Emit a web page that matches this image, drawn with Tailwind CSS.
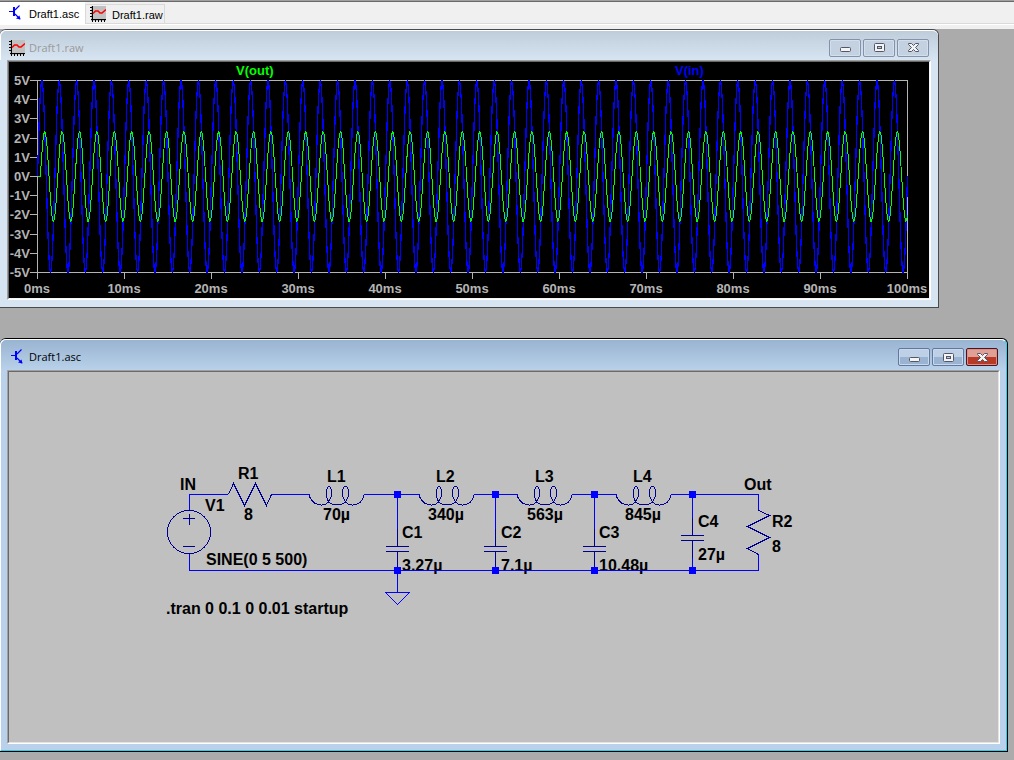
<!DOCTYPE html>
<html lang="en">
<head>
  <meta charset="UTF-8" />
  <meta name="viewport" content="width=device-width, initial-scale=1" />
  <title>Draft1 - Circuit Simulator</title>
  <script src="https://cdn.jsdelivr.net/npm/@tailwindcss/browser@4"></script>
</head>
<body class="bg-[#ababab] text-black h-screen flex flex-col overflow-hidden font-['Open_Sans','Noto_Sans',sans-serif]">

  <!-- Shared icons -->
  <svg class="hidden">
    <symbol id="transistor" viewBox="0 0 16 16">
      <path d="M5 3h2v9H5z" fill="#00f" />
      <path d="M1 7.500H5M7 6L11.500 1.500M7 10L12 15" stroke="#00f" stroke-width="1.200" fill="none" />
      <path d="M12.500 15.500L8 14.500 11.500 11.500z" fill="#00f" />
    </symbol>
    <symbol id="graph" viewBox="0 0 16 16">
      <path d="M1 0h15v15H1z" fill="#c0c0c0" />
      <path d="M2.500 0v16M1 13.500h15M0 1.500h3M0 4.500h3M0 7.500h3M0 10.500h3M5.500 13v3M8.500 13v3M11.500 13v3M14.500 13v3" stroke="#000" fill="none" shape-rendering="crispEdges" />
      <path d="M3 7.500L5.500 5H8L10 7H12L16 3.500" stroke="#f00" stroke-width="1.600" fill="none" />
    </symbol>
    <symbol id="minimize" viewBox="0 0 13 11">
      <rect x="1.500" y="5.500" width="10" height="4" rx="1" fill="#f4f4f4" stroke="#535666" />
    </symbol>
    <symbol id="maximize" viewBox="0 0 13 11">
      <rect x="1.500" y="1.500" width="10" height="8" rx="1" fill="#f4f4f4" stroke="#535666" />
      <rect x="4.500" y="4.500" width="4" height="2" fill="#b8cbe0" stroke="#535666" />
    </symbol>
    <symbol id="close" viewBox="0 0 13 11">
      <path d="M1.500 1.500H4.500L6.500 3.500 8.500 1.500H11.500V2.500L8.500 5.500 11.500 8.500V9.500H8.500L6.500 7.500 4.500 9.500H1.500V8.500L4.500 5.500 1.500 2.500z" fill="#f4f4f4" stroke="#535666" />
    </symbol>
  </svg>

  <!-- Document tabs -->
  <header class="shrink-0 h-[29px] bg-[#f0f0f0] border-t border-[#a0a0a0]">
    <nav class="flex h-6 border-t border-t-[#696969] border-b border-b-white">
      <a href="#schematic" class="flex items-start gap-[5px] w-[85px] h-[23px] pt-[2px] pl-2 bg-white font-['Liberation_Sans',sans-serif] text-[11px] leading-6">
        <svg class="w-4 h-4 shrink-0"><use href="#transistor" /></svg>
        <span class="-mt-[2px]">Draft1.asc</span>
      </a>
      <div class="flex flex-1 border-b border-[#dadada]">
        <a href="#waveform" class="flex items-center gap-[6px] w-20 mt-[2px] pl-1 border border-b-0 border-[#d9d9d9] font-['Liberation_Sans',sans-serif] text-[11px] leading-4">
          <svg class="w-4 h-4 shrink-0"><use href="#graph" /></svg>
          <span class="pt-[2px]">Draft1.raw</span>
        </a>
      </div>
    </nav>
  </header>

  <main class="relative flex-1">

    <!-- Waveform window -->
    <section id="waveform" class="absolute left-0 top-0 flex flex-col bg-[#d7e4f2] border border-l-0 border-[#4a4a4a] rounded-t-md">
      <div class="flex items-center h-[30px] pl-2 pr-[9px] rounded-t-md border-t border-l border-white bg-linear-to-b from-[#bfcddb] to-[#d7e4f2]">
        <svg class="w-4 h-4 mt-[5px]"><use href="#graph" /></svg>
        <h2 class="flex-1 pl-1 pt-[5px] text-[11px] leading-4 text-[#9a9a9a]">Draft1.raw</h2>
        <div class="flex gap-[2px] pt-1">
          <button aria-label="Minimize" class="flex items-center justify-center w-8 h-[18px] rounded-xs border border-[#8491ad] bg-[#c3d1e0] inset-ring inset-ring-[#d3dfeb]"><svg class="w-[13px] h-[11px]"><use href="#minimize" /></svg></button>
          <button aria-label="Maximize" class="flex items-center justify-center w-8 h-[18px] rounded-xs border border-[#8491ad] bg-[#c3d1e0] inset-ring inset-ring-[#d3dfeb]"><svg class="w-[13px] h-[11px]"><use href="#maximize" /></svg></button>
          <button aria-label="Close" class="flex items-center justify-center w-8 h-[18px] rounded-xs border border-[#8491ad] bg-[#c3d1e0] inset-ring inset-ring-[#d3dfeb]"><svg class="w-[13px] h-[11px]"><use href="#close" /></svg></button>
        </div>
      </div>
      <div class="px-[7px] pb-[7px]">
        <div class="border border-t-[#a0a0a0] border-l-[#a0a0a0] border-r-white border-b-white">
          <div class="border border-t-[#696969] border-l-[#696969] border-r-[#f4f4f4] border-b-[#f4f4f4] bg-black">
            <svg class="block w-[920px] h-[236px] font-['Liberation_Sans',sans-serif] font-bold text-[13px]" viewBox="9 62 920 236">
              <g id="axes" stroke="#b4b4b4" fill="none" shape-rendering="crispEdges">
                <rect x="37.500" y="80.500" width="870" height="192" />
              </g>
              <g id="labels" fill="#b4b4b4"></g>
              <text x="236" y="75" fill="#0f0">V(out)</text>
              <text x="675" y="75" fill="#00f">V(in)</text>
              <polyline id="vin" stroke="#00f" stroke-width="1.300" fill="none" shape-rendering="crispEdges" />
              <polyline id="vout" stroke="#0f0" fill="none" shape-rendering="crispEdges" />
            </svg>
          </div>
        </div>
      </div>
    </section>

    <!-- Schematic window -->
    <section id="schematic" class="absolute left-0 right-[6px] top-[309px] bottom-2 flex flex-col bg-[#b9d1ea] border border-l-0 border-black rounded-t-md">
      <div class="flex-1 min-h-0 flex flex-col border border-t-white border-l-white border-r-[#25cfee] border-b-[#25cfee] rounded-t-md bg-linear-to-b from-[#99b4d1] to-[#b9d1ea] to-[30px]">
        <div class="flex items-center shrink-0 h-[30px] pl-[9px] pr-2">
          <svg class="w-4 h-4 mt-[2px]"><use href="#transistor" /></svg>
          <h2 class="flex-1 pl-[3px] pt-1 text-[11px] leading-4">Draft1.asc</h2>
          <div class="flex gap-[2px] pt-1">
            <button aria-label="Minimize" class="flex items-center justify-center w-8 h-[18px] rounded-xs border border-[#65779a] bg-linear-to-b from-[#bdd0e6] from-50% to-[#9ab3d0] to-50% inset-ring inset-ring-[#c6d9ee]"><svg class="w-[13px] h-[11px]"><use href="#minimize" /></svg></button>
            <button aria-label="Maximize" class="flex items-center justify-center w-8 h-[18px] rounded-xs border border-[#65779a] bg-linear-to-b from-[#bdd0e6] from-50% to-[#9ab3d0] to-50% inset-ring inset-ring-[#c6d9ee]"><svg class="w-[13px] h-[11px]"><use href="#maximize" /></svg></button>
            <button aria-label="Close" class="flex items-center justify-center w-8 h-[18px] rounded-xs border border-[#4a1420] bg-linear-to-b from-[#e0a096] from-50% to-[#b83a26] to-50% inset-ring inset-ring-[#dc8f84]"><svg class="w-[13px] h-[11px]"><use href="#close" /></svg></button>
          </div>
        </div>
        <div class="flex-1 min-h-0 flex pl-[6px] pr-[6px] pb-[6px]">
          <div class="flex-1 flex border border-t-[#a0a0a0] border-l-[#a0a0a0] border-r-white border-b-white">
            <div class="flex-1 overflow-hidden border border-t-[#696969] border-l-[#696969] border-r-[#e3e3e3] border-b-[#e3e3e3] bg-[#c0c0c0]">
              <svg class="block w-[989px] h-[370px] font-['Liberation_Sans',sans-serif] font-bold text-[16px]" viewBox="9 372 989 370">
                <defs>
                  <path id="coil" d="M0 0V2C3 9 8 10.500 12 10.500C19 10.500 22 4 22 -1C22 -5 21 -8 19.500 -8C18 -8 17 -5 17 -1C17 4 19 10.500 27.500 10.500C36 10.500 39 4 39 -1C39 -5 38 -8 36 -8C34 -8 33 -5 33 -1C33 4 36 10.500 43 10.500C48 10.500 52 9 54 2V0" />
                  <path id="cap" d="M0 -20V-2M-12 -2H11M-12 3H11M0 3V20" />
                </defs>

                <g fill="#000">
                  <text x="180" y="490">IN</text>
                  <text x="238" y="479">R1</text>
                  <text x="205" y="511">V1</text>
                  <text x="244" y="520">8</text>
                  <text x="206" y="565">SINE(0 5 500)</text>
                  <text x="166" y="614">.tran 0 0.1 0 0.01 startup</text>
                  <text x="327" y="482">L1</text>
                  <text x="323" y="520">70µ</text>
                  <text x="436" y="482">L2</text>
                  <text x="428" y="520">340µ</text>
                  <text x="535" y="482">L3</text>
                  <text x="527" y="520">563µ</text>
                  <text x="633" y="482">L4</text>
                  <text x="625" y="520">845µ</text>
                  <text x="402" y="538">C1</text>
                  <text x="402" y="571">3.27µ</text>
                  <text x="501" y="538">C2</text>
                  <text x="501" y="571">7.1µ</text>
                  <text x="599" y="538">C3</text>
                  <text x="599" y="571">10.48µ</text>
                  <text x="698" y="527">C4</text>
                  <text x="698" y="560">27µ</text>
                  <text x="744" y="490">Out</text>
                  <text x="772" y="527">R2</text>
                  <text x="772" y="552">8</text>
                </g>

                <!-- Wires and ground -->
                <path stroke="#00f" fill="none" shape-rendering="crispEdges" d="M189.500 510V494.500H228M271 494.500H309.500M363.500 494.500H419.500M473.500 494.500H517.500M571.500 494.500H616.500M670.500 494.500H758.500V510M758.500 554V570.500H189.500V553M397.500 494V529M495.500 494V529M594.500 494V529M692.500 494V518M397.500 566V592.500M692.500 556V570M385.500 592.500H409.500L397.500 604.500z" />

                <!-- Components -->
                <g stroke="#000090" fill="none" shape-rendering="crispEdges">
                  <circle cx="189" cy="532" r="21.500" />
                  <path d="M183 518.500H195M189.500 514V525M183 546.500H195" />
                  <path d="M228.500 494.500L233.500 483.500 244.500 505.500 255.500 483.500 266.500 505.500 271.500 494.500" />
                  <path d="M758.500 510V510.500L769.500 515.500 747.500 526.500 769.500 537.500 747.500 548.500 758.500 554.500" />
                  <use href="#coil" x="309.500" y="494.500" />
                  <use href="#coil" x="419.500" y="494.500" />
                  <use href="#coil" x="517.500" y="494.500" />
                  <use href="#coil" x="616.500" y="494.500" />
                  <use href="#cap" x="397.500" y="548.500" />
                  <use href="#cap" x="495.500" y="548.500" />
                  <use href="#cap" x="594.500" y="548.500" />
                  <use href="#cap" x="692.500" y="537.500" />
                </g>

                <!-- Junctions -->
                <path fill="#00f" d="M394 491h7v7h-7zM492 491h7v7h-7zM591 491h7v7h-7zM689 491h7v7h-7zM394 567h7v7h-7zM492 567h7v7h-7zM591 567h7v7h-7zM689 567h7v7h-7z" />
              </svg>
            </div>
          </div>
        </div>
      </div>
    </section>
  </main>

  <script>
    const SVG = 'http://www.w3.org/2000/svg';
    const axes = document.getElementById('axes');
    const labels = document.getElementById('labels');

    const timeToX = (ms) => 37.5 + ms * 8.7;
    const voltToY = (v) => 176.5 - v * 19.2;

    function addTick(d) {
      const tick = document.createElementNS(SVG, 'path');
      tick.setAttribute('d', d);
      axes.appendChild(tick);
    }

    function addLabel(text, x, y, anchor) {
      const label = document.createElementNS(SVG, 'text');
      label.textContent = text;
      label.setAttribute('x', x);
      label.setAttribute('y', y);
      label.setAttribute('text-anchor', anchor);
      labels.appendChild(label);
    }

    for (let v = -5; v <= 5; v++) {
      const y = Math.floor(voltToY(v));
      addTick(`M30 ${y + 0.5}H37`);
      addLabel(`${v}V`, 30, y + 5, 'end');
    }

    for (let ms = 0; ms <= 100; ms += 10) {
      const x = Math.floor(timeToX(ms));
      addTick(`M${x + 0.5} 272V279`);
      addLabel(`${ms}ms`, x, 293, 'middle');
    }

    // 500 Hz sine, sampled every 0.1 ms
    function sine(amplitude, delay) {
      const points = [];
      for (let i = 0; i <= 1000; i++) {
        const ms = i / 10;
        const v = ms < delay ? 0 : amplitude * Math.sin(Math.PI * (ms - delay));
        points.push(`${timeToX(ms).toFixed(1)},${voltToY(v).toFixed(1)}`);
      }
      return points.join(' ');
    }

    document.getElementById('vin').setAttribute('points', sine(5, 0));
    document.getElementById('vout').setAttribute('points', sine(2.35, 0.33));
  </script>

</body>
</html>
